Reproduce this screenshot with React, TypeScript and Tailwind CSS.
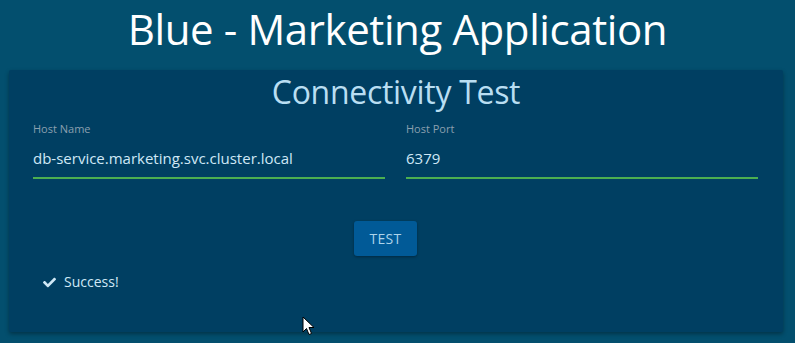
import { FaCheck } from "react-icons/fa";

function Field({ label, value }: { label: string; value: string }) {
  return (
    <div className="flex flex-col">
      <label className="text-[11px] leading-[14px] text-[#8b9faf]">{label}</label>
      <div className="mt-[11px] h-[22px] text-[15px] leading-[22px] text-[#cfe8f6]">
        {value}
      </div>
      <div className="mt-[8px] h-[2px] bg-[#4caf50]" />
    </div>
  );
}

export default function App() {
  return (
    <div
      className="relative h-[343px] w-[795px] overflow-hidden bg-[#034f6e] text-white"
      style={{ fontFamily: '"Open Sans", "Noto Sans", sans-serif' }}
    >
      <h1 className="h-[70px] pt-[1px] text-center text-[42px] leading-[56px] tracking-[-0.4px] text-white">
        Blue - Marketing Application
      </h1>

      <div className="mx-[9px] h-[262px] w-[774px] rounded-[2px] bg-[#003f62] px-[24px] pt-[2px] shadow-[0_2px_4px_rgba(0,0,0,0.35)]">
        <h2 className="text-center text-[32px] leading-[40px] tracking-[-0.3px] text-[#b9def2]">
          Connectivity Test
        </h2>

        <div className="mt-[10px] grid grid-cols-[352px_352px] gap-x-[21px]">
          <Field label="Host Name" value="db-service.marketing.svc.cluster.local" />
          <Field label="Host Port" value="6379" />
        </div>

        <div className="mt-[42px] flex justify-center pr-[21px]">
          <button className="h-[35px] w-[63px] rounded-[3px] bg-[#015a97] text-[14px] tracking-[0.3px] text-[#acd3ea] shadow-[0_1px_3px_rgba(0,0,0,0.35)]">
            TEST
          </button>
        </div>

        <div className="mt-[16px] flex items-center gap-[8px] pl-[10px]">
          <FaCheck className="h-[13px] w-[13px] text-[#cfe8f6]" />
          <span className="text-[14px] leading-[20px] text-[#cfe8f6]">Success!</span>
        </div>
      </div>

      <svg
        className="absolute left-[302px] top-[316px]"
        width="14"
        height="20"
        viewBox="0 0 14 20"
      >
        <path d="M1 1 L1 16 L4.5 12.5 L7 18.5 L9.5 17.5 L7 11.5 L12 11.5 Z" fill="#fff" stroke="#000" strokeWidth="1" />
      </svg>
    </div>
  );
}
